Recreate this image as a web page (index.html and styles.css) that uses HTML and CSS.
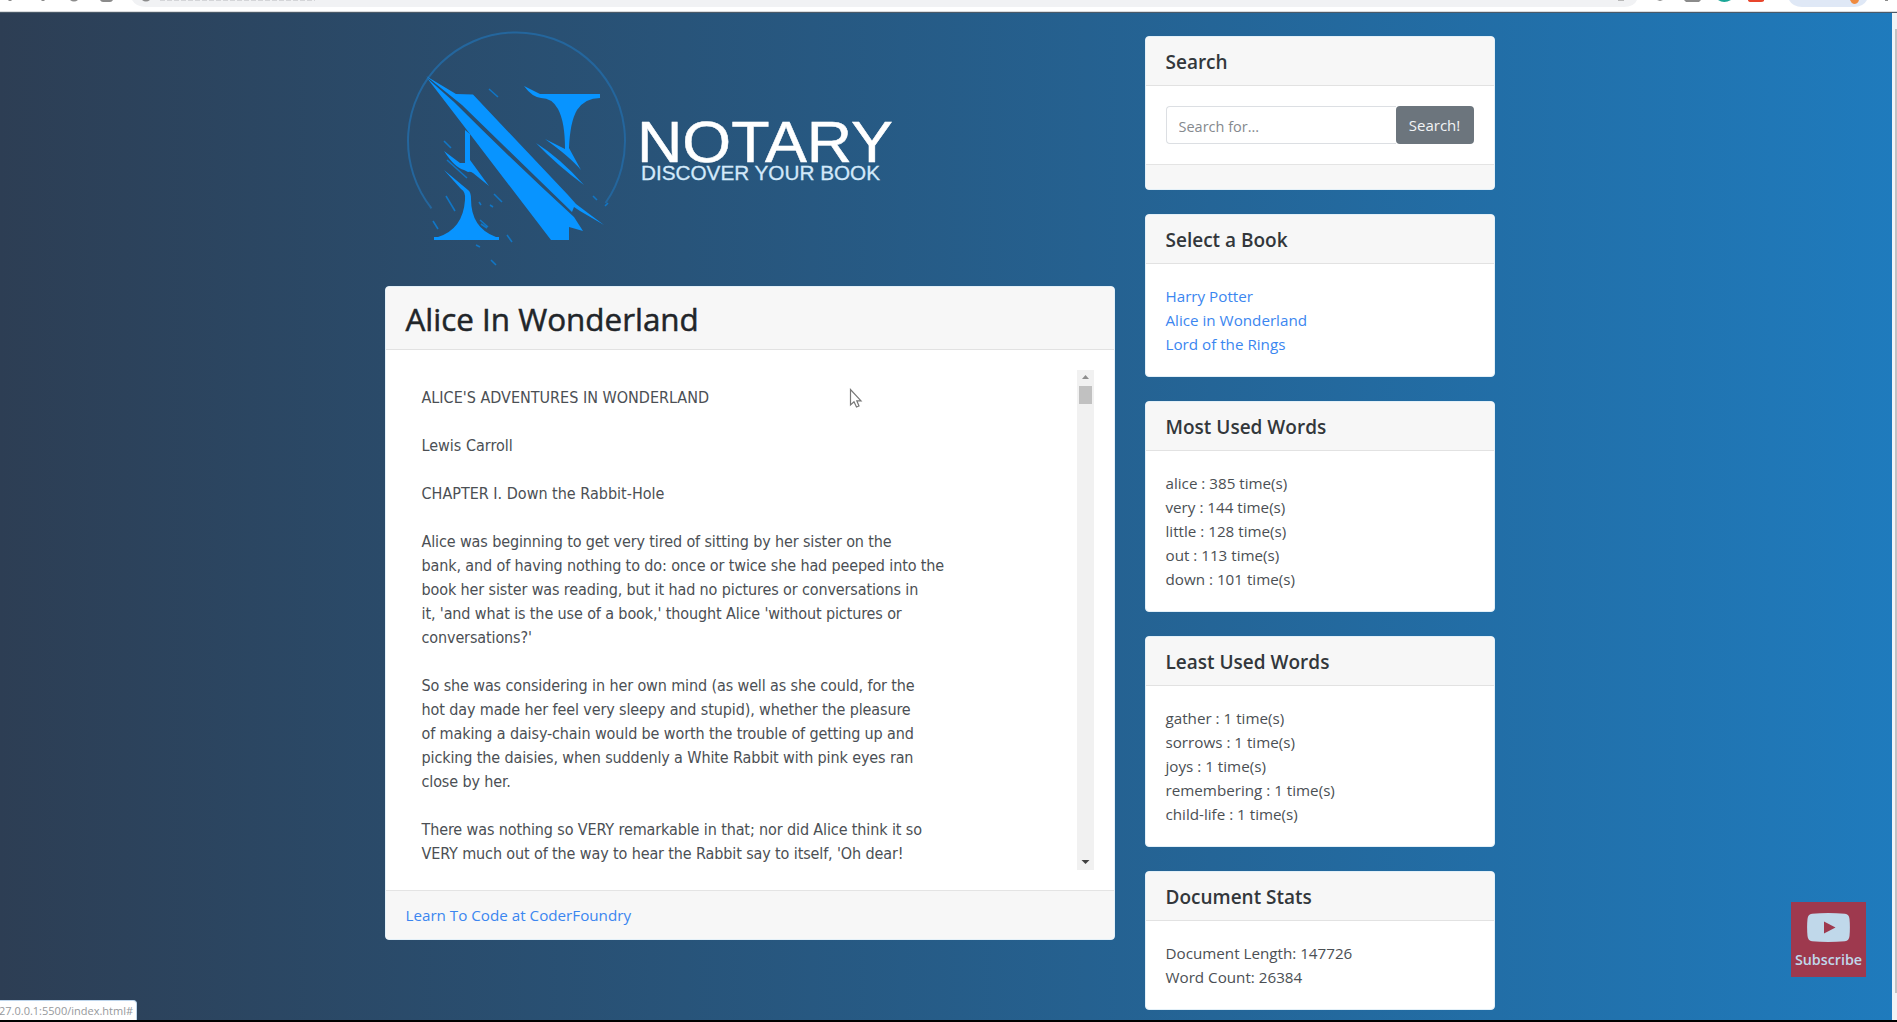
FILE: index.html
```html
<!DOCTYPE html>
<html lang="en">
<head>
<meta charset="utf-8">
<title>Notary - Discover Your Book</title>
<link rel="stylesheet" href="styles.css">
</head>
<body>
<div class="browser-bar">
  <svg width="1897" height="13" viewBox="0 0 1897 13" aria-hidden="true">
    <path d="M132 0H1637Q1634 7 1624 7H146Q136 7 132 0Z" fill="#f1f2f4"/>
    <path d="M1789 0H1867Q1863 7 1854 7H1802Q1793 7 1789 0Z" fill="#dfe8f6"/>
    <g fill="#8b8b8b">
      <path d="M8 0H12L11 1H9ZM41 0H45L44 1H42ZM70 0H78Q74 3 70 0ZM100 0H113Q112 2 110 2H103Q101 2 100 0ZM142 0H150Q146 3 142 0Z"/>
      <path d="M1684 0H1701L1699 2H1686ZM1657 0H1663L1660 1ZM1885 0H1888V1H1885Z"/>
    </g>
    <path d="M160 0H315" stroke="#d4d5d8" stroke-width="2" stroke-dasharray="5 2"/>
    <path d="M1618 0H1624" stroke="#b9b9b9" stroke-width="2"/>
    <path d="M1718 0H1731Q1724 4 1718 0Z" fill="#1aa697"/>
    <path d="M1748 0H1764V1Q1763 2 1761 2H1751Q1748 2 1748 0Z" fill="#e8452c"/>
    <path d="M1850 0H1859Q1858 4 1854 4Q1851 3 1850 0Z" fill="#ef8a3f"/>
    <path d="M0 11.8H1897" stroke="#c9ccd0" stroke-width="1"/>
  </svg>
</div>
<div class="viewport">
  <div class="page">
    <main class="main">
      <div class="logo">
        <svg width="560" height="262" viewBox="385 12 560 262" role="img" aria-label="Notary">
          <path d="M431.500 208.300A108.500 108.500 0 1 1 605.500 203" fill="none" stroke="#24669d" stroke-width="2"/>
          <g fill="#0894ff">
            <path d="M426 76L456 94L473 94.500L568 195L576 204L604 225L580 211L574 207L572 212Q540 181 462 105Z"/>
            <path d="M427 78L454 102Q515 163 574 217L583 231L569 227V240H551L460 121Z"/>
            <path d="M524 86L540 94H600V98Q585 98 577 110Q570 122 569 148L581 170Q570 157 545 139L565 149Q565 122 558 109Q552 98 541 98Q532 97 524 86Z"/>
            <path d="M536 143Q560 158 584 185Q558 166 536 143Z"/>
            <path d="M465 130L470 134V160L489 186L473 173Q470 171 468 172L464 170Q455 168 444 151L460 163H465Z"/>
            <path d="M444 170L468 190Q471 192 471 199Q471 228 496 237H499V240H434V237H438Q463 229 465 200Q466 192 461 189Z"/>
          </g>
          <path d="M489 89L498 97M444 141L451 148M447 160L467 178M446 196L455 211M494 194L502 202M480 220L488 227M433 221L438 229M507 235L512 242M476 245L480 247M491 260L496 265M593 196L597 200M479 202L481 205M490 205L493 207M481 224L487 228M605 206L608 203" fill="none" stroke="#1176c5" stroke-width="1.600"/>
          <text class="logo-name" x="637" y="162" textLength="256" lengthAdjust="spacingAndGlyphs">NOTARY</text>
          <text class="logo-tagline" x="641" y="179.500" textLength="239" lengthAdjust="spacingAndGlyphs">DISCOVER YOUR BOOK</text>
        </svg>
      </div>
      <section class="card">
        <div class="card-header"><h2>Alice In Wonderland</h2></div>
        <div class="card-body">
          <div class="reader">
<div class="reader-text"><p class="caps">ALICE'S ADVENTURES IN WONDERLAND

Lewis Carroll

CHAPTER I. Down the Rabbit-Hole
</p><p>Alice was beginning to get very tired of sitting by her sister on the
bank, and of having nothing to do: once or twice she had peeped into the
book her sister was reading, but it had no pictures or conversations in
it, 'and what is the use of a book,' thought Alice 'without pictures or
conversations?'

So she was considering in her own mind (as well as she could, for the
hot day made her feel very sleepy and stupid), whether the pleasure
of making a daisy-chain would be worth the trouble of getting up and
picking the daisies, when suddenly a White Rabbit with pink eyes ran
close by her.

There was nothing so VERY remarkable in that; nor did Alice think it so
VERY much out of the way to hear the Rabbit say to itself, 'Oh dear!</p></div>
            <div class="scrollbar">
              <svg width="17" height="14" viewBox="0 0 17 14"><path d="M5 9L8.500 5L12 9Z" fill="#8d8d8d"/></svg>
              <div class="thumb"></div>
              <svg class="down" width="17" height="17" viewBox="0 0 17 17"><path d="M4.500 7H12.500L8.500 11Z" fill="#404040"/></svg>
            </div>
          </div>
        </div>
        <div class="card-footer"><a href="#">Learn To Code at CoderFoundry</a></div>
      </section>
    </main>
    <aside class="side">
      <section class="card">
        <div class="card-header"><h5>Search</h5></div>
        <div class="card-body">
          <div class="search"><input type="text" placeholder="Search for..."><button type="button">Search!</button></div>
        </div>
        <div class="card-footer"></div>
      </section>
      <section class="card">
        <div class="card-header"><h5>Select a Book</h5></div>
        <ul class="card-body">
          <li><a href="#">Harry Potter</a></li>
          <li><a href="#">Alice in Wonderland</a></li>
          <li><a href="#">Lord of the Rings</a></li>
        </ul>
      </section>
      <section class="card">
        <div class="card-header"><h5>Most Used Words</h5></div>
        <ul class="card-body">
          <li>alice : 385 time(s)</li>
          <li>very : 144 time(s)</li>
          <li>little : 128 time(s)</li>
          <li>out : 113 time(s)</li>
          <li>down : 101 time(s)</li>
        </ul>
      </section>
      <section class="card">
        <div class="card-header"><h5>Least Used Words</h5></div>
        <ul class="card-body">
          <li>gather : 1 time(s)</li>
          <li>sorrows : 1 time(s)</li>
          <li>joys : 1 time(s)</li>
          <li>remembering : 1 time(s)</li>
          <li>child-life : 1 time(s)</li>
        </ul>
      </section>
      <section class="card">
        <div class="card-header"><h5>Document Stats</h5></div>
        <ul class="card-body">
          <li>Document Length: 147726</li>
          <li>Word Count: 26384</li>
        </ul>
      </section>
    </aside>
  </div>
  <div class="page-scroll"><div class="page-thumb"></div></div>
</div>
<div class="status">27.0.0.1:5500/index.html#</div>
<div class="subscribe">
  <svg width="43" height="29" viewBox="0 0 43 29"><path d="M5 .8Q21 -.8 38 .8Q42 1.200 42.500 6Q43.300 14 42.500 23Q42 27.800 38 28.200Q21 29.800 5 28.200Q1 27.800 .5 23Q-.3 14 .5 6Q1 1.200 5 .8Z" fill="#c0d8ea"/><path d="M17 8.500L28.500 14.500L17 20.500Z" fill="#9e394e"/></svg>
  <span>Subscribe</span>
</div>
<svg class="cursor" width="14" height="21" viewBox="0 0 14 21"><path d="M1.500 1.500V17L5 13.800L7.500 19L10 18L7.800 12.800H12Z" fill="#fff" stroke="#777" stroke-width="1.200"/></svg>
</body>
</html>
```
FILE: styles.css
```css
* { box-sizing: border-box; }

body {
  margin: 0;
  height: 1022px;
  overflow: hidden;
  display: flex;
  flex-direction: column;
  font: 15.2px/24px "Open Sans", "Noto Sans", sans-serif;
  color: #4b4f54;
  border-bottom: 2px solid #000;
  position: relative;
}

h2, h5, p, ul { margin: 0; padding: 0; }
li { list-style: none; }
a { color: #3b86f0; text-decoration: none; }

.browser-bar { height: 12px; background: #fff; flex: none; }
.browser-bar svg { display: block; }

.viewport {
  flex: 1;
  min-height: 0;
  display: flex;
  background: linear-gradient(to right, #2d3e54, #1f7bbd);
  border-top: 1px solid #4b5a68;
}

.page {
  flex: 1;
  display: flex;
  justify-content: center;
  gap: 30px;
  padding-left: 4px;
  padding-right: 17px;
  overflow: hidden;
}

.main { width: 730px; }
.side { width: 350px; padding-top: 23px; display: flex; flex-direction: column; gap: 24px; }

.logo { height: 274px; }
.logo svg { display: block; margin-top: -1px; }
.logo text { font-family: "Liberation Sans", Arial, sans-serif; }
.logo-name { font-size: 58px; fill: #fff; stroke: #fff; stroke-width: .5px; }
.logo-tagline { font-size: 20px; fill: #d3e9fa; stroke: #d3e9fa; stroke-width: .3px; }

.card { background: #fff; border: 1px solid #e3f0f8; border-radius: 4px; flex: none; overflow: hidden; }
.card-header { background: #f7f7f7; border-bottom: 1px solid #e2e2e2; padding: 13px 20px 11px; }
.card-header h5 { font-size: 19px; line-height: 24px; font-weight: 600; color: #33373b; }
.card-header h2 { font-size: 31.4px; line-height: 38.400px; font-weight: 500; color: #212529; -webkit-text-stroke: .5px #212529; }
.card-body { padding: 20px; }
.card-footer { background: #f7f7f7; border-top: 1px solid #e4e4e4; padding: 12px 20px; }

.reader { height: 500px; display: flex; justify-content: space-between; overflow: hidden; }
.reader-text { padding: 16px 0 0 16px; }
.reader-text p { font: 16px/24px "DejaVu Sans Condensed", "DejaVu Sans", sans-serif; letter-spacing: -.12px; white-space: pre; }
.reader-text .caps { letter-spacing: 0; padding-bottom: 24px; }

.scrollbar { width: 17px; background: #f1f1f1; display: flex; flex-direction: column; }
.scrollbar svg { display: block; flex: none; }
.thumb { width: 13px; height: 18px; margin: 2px 2px 0; background: #c1c1c1; }
.down { margin-top: auto; }

.search { display: flex; height: 38px; }
.search input { flex: 1; min-width: 0; border: 1px solid #dcdfe3; border-right: 0; border-radius: 4px 0 0 4px; padding: 2px 12px 0; font: 14.5px "Open Sans", sans-serif; }
.search input::placeholder { color: #85898e; opacity: 1; }
.search button { width: 78px; padding: 0; border: 0; border-radius: 4px; background: #6c757d; color: #f2f4f6; font: 15px "Open Sans", sans-serif; }

.page-scroll { width: 5px; background: #f1f3f6; padding: 16px 0 27px 3px; display: flex; }
.page-thumb { flex: 1; background: #c2c2c2; }

.status {
  position: absolute; left: 0; bottom: 0; width: 137px; height: 20px;
  background: #fff; border: 1px solid #bfd6ec; border-left: 0; border-bottom: 0; border-radius: 0 4px 0 0;
  font-size: 11px; line-height: 20px; color: #96999c; text-indent: -1px; white-space: nowrap; overflow: hidden;
}

.subscribe {
  position: absolute; left: 1791px; top: 902px; width: 75px; height: 75px;
  background: #9e394e; color: #c0d8ea; display: flex; flex-direction: column; align-items: center; padding-top: 11px;
  font-size: 14.3px; font-weight: 600; line-height: 20px; gap: 8px;
}

.cursor { position: absolute; left: 849px; top: 388px; }
```
